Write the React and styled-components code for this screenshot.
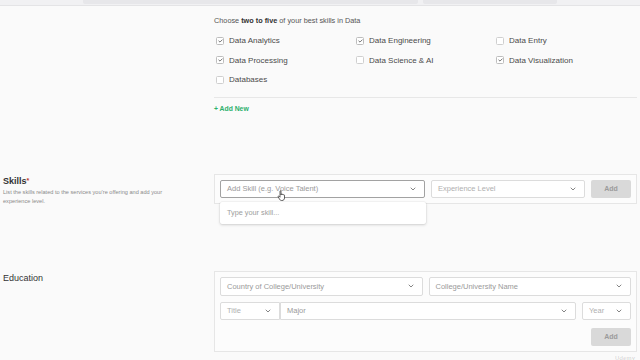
import React from "react";
import styled, { createGlobalStyle } from "styled-components";

const Global = createGlobalStyle`
  html, body { margin: 0; padding: 0; background: #fafafa; }
  body { font-family: "Liberation Sans", Arial, sans-serif; color: #3d3d3d; width: 640px; height: 360px; overflow: hidden; }
  * { box-sizing: border-box; }
`;

const TopStrip = styled.div`
  height: 6px;
  background: #f1f1f3;
  border-bottom: 1px solid #e4e4e6;
  display: flex;
  gap: 5px;
  padding-left: 83px;
`;
const Tab = styled.div`
  width: ${(p) => p.w}px;
  height: 4px;
  background: #e7e7ea;
  border-radius: 0 0 2px 2px;
`;

const Page = styled.div`
  position: relative;
  padding: 0 3px;
`;

const Section = styled.section`
  display: grid;
  grid-template-columns: 211px 1fr;
  align-items: start;
  margin-top: ${(p) => p.mt}px;
`;

const Side = styled.div`
  padding-top: ${(p) => p.pt || 0}px;
`;

const Heading = styled.div`
  font-size: 9px;
  line-height: 12px;
  font-weight: ${(p) => p.weight || 600};
  color: #333;
`;
const Req = styled.span`
  color: #c0392b;
  font-size: 7px;
  vertical-align: top;
`;
const Desc = styled.div`
  font-size: 5.6px;
  line-height: 9px;
  color: #8a8a8a;
  margin-top: 1px;
  width: 175px;
`;

const Main = styled.div`
  padding-top: ${(p) => p.pt || 0}px;
`;

const Intro = styled.div`
  font-size: 7.3px;
  line-height: 10px;
  color: #555;
  b { color: #333; font-weight: 700; }
`;

const CheckGrid = styled.div`
  display: grid;
  grid-template-columns: repeat(3, 140px);
  grid-auto-rows: 19.5px;
  margin-top: 5px;
  padding-left: 2px;
`;
const CheckItem = styled.label`
  display: flex;
  align-items: center;
  gap: 5px;
  font-size: 8px;
  color: #4a4a4a;
`;
const Box = styled.span`
  width: 8px;
  height: 8px;
  border: 1px solid ${(p) => (p.on ? "#bdbdbd" : "#cfcfcf")};
  border-radius: 1.5px;
  background: #fff;
  display: flex;
  align-items: center;
  justify-content: center;
`;

const Divider = styled.div`
  height: 1px;
  background: #e7e7e7;
  margin-top: 7.5px;
`;

const AddNew = styled.div`
  margin-top: 5.5px;
  font-size: 6.8px;
  line-height: 10px;
  font-weight: 700;
  color: #2ab06a;
`;

const Panel = styled.div`
  border: 1px solid #e6e6e6;
  background: #fcfcfc;
  padding: 5px;
  display: flex;
  flex-direction: column;
  gap: ${(p) => p.gap || 0}px;
  position: relative;
`;

const SkillRow = styled.div`
  display: grid;
  grid-template-columns: 205px 154px 40px;
  gap: 6px;
`;

const Field = styled.div`
  height: ${(p) => p.h || 18}px;
  border: 1px solid ${(p) => (p.focus ? "#a2a2a2" : "#dcdcdc")};
  border-radius: ${(p) => p.radius || "2px"};
  background: #fff;
  display: flex;
  align-items: center;
  justify-content: space-between;
  padding: 0 8px 0 6px;
  font-size: 7.5px;
  color: ${(p) => (p.dim ? "#b0b0b0" : "#9a9a9a")};
`;

const Chevron = () => (
  <svg width="6" height="4" viewBox="0 0 6 4">
    <path d="M1 1 L3 3 L5 1" fill="none" stroke="#777" strokeWidth="0.9" strokeLinecap="round" strokeLinejoin="round" />
  </svg>
);

const AddButton = styled.button`
  height: 18px;
  width: 40px;
  border: none;
  border-radius: 2px;
  background: #d9d9d9;
  color: #9b9b9b;
  font-family: inherit;
  font-size: 7px;
  font-weight: 700;
  padding: 0;
  align-self: ${(p) => (p.end ? "flex-end" : "auto")};
  margin-top: ${(p) => p.mt || 0}px;
`;

const Dropdown = styled.div`
  position: absolute;
  left: 5px;
  top: 27px;
  width: 206px;
  height: 22px;
  background: #fff;
  border-radius: 2px;
  box-shadow: 0 1px 3px rgba(0, 0, 0, 0.16), 0 0 0 0.5px rgba(0, 0, 0, 0.05);
  display: flex;
  align-items: center;
  padding-left: 7px;
  font-size: 7.3px;
  color: #9d9d9d;
  z-index: 2;
`;

const EduRow = styled.div`
  display: grid;
  grid-template-columns: ${(p) => p.cols};
  gap: ${(p) => p.gap}px;
`;
const Joined = styled.div`
  display: grid;
  grid-template-columns: 60px 1fr;
`;

const Cursor = styled.svg`
  position: absolute;
  left: 277px;
  top: 184px;
  z-index: 3;
`;

const Watermark = styled.div`
  position: absolute;
  right: 5px;
  top: 349px;
  font-size: 6px;
  color: rgba(0, 0, 0, 0.14);
  font-weight: 700;
`;

const skills = [
  ["Data Analytics", true],
  ["Data Engineering", true],
  ["Data Entry", false],
  ["Data Processing", true],
  ["Data Science & AI", false],
  ["Data Visualization", true],
  ["Databases", false],
];

const Check = () => (
  <svg width="5" height="4" viewBox="0 0 5 4">
    <path d="M0.8 2 L2 3.1 L4.2 0.9" fill="none" stroke="#555" strokeWidth="0.8" strokeLinecap="round" strokeLinejoin="round" />
  </svg>
);

export default function App() {
  return (
    <>
      <Global />
      <TopStrip>
        <Tab w={335} />
        <Tab w={134} />
      </TopStrip>
      <Page>
        <Section mt={0}>
          <Side />
          <Main pt={10}>
            <Intro>
              Choose <b>two to five</b> of your best skills in Data
            </Intro>
            <CheckGrid>
              {skills.map(([name, on]) => (
                <CheckItem key={name}>
                  <Box on={on}>{on && <Check />}</Box>
                  {name}
                </CheckItem>
              ))}
            </CheckGrid>
            <Divider />
            <AddNew>+ Add New</AddNew>
          </Main>
        </Section>

        <Section mt={60}>
          <Side pt={1}>
            <Heading>
              Skills<Req>*</Req>
            </Heading>
            <Desc>
              List the skills related to the services you’re offering and add your experience level.
            </Desc>
          </Side>
          <Panel>
            <SkillRow>
              <Field focus>
                Add Skill (e.g. Voice Talent)
                <Chevron />
              </Field>
              <Field dim>
                Experience Level
                <Chevron />
              </Field>
              <AddButton>Add</AddButton>
            </SkillRow>
            <Dropdown>Type your skill...</Dropdown>
          </Panel>
        </Section>

        <Section mt={65}>
          <Side pt={1}>
            <Heading weight={500}>Education</Heading>
          </Side>
          <Panel gap={6}>
            <EduRow cols="1fr 1fr" gap={6}>
              <Field h={19}>
                Country of College/University
                <Chevron />
              </Field>
              <Field h={19}>
                College/University Name
                <Chevron />
              </Field>
            </EduRow>
            <EduRow cols="356px 49px" gap={6}>
              <Joined>
                <Field dim radius="2px 0 0 2px">
                  Title
                  <Chevron />
                </Field>
                <Field radius="0 2px 2px 0">
                  Major
                  <Chevron />
                </Field>
              </Joined>
              <Field dim>
                Year
                <Chevron />
              </Field>
            </EduRow>
            <AddButton end mt={2}>Add</AddButton>
          </Panel>
        </Section>

        <Cursor width="10" height="12" viewBox="0 0 10 12">
          <path
            d="M3 1.2 C3 0.6 4 0.6 4 1.2 L4 5 L4.3 4.2 C4.5 3.7 5.3 3.8 5.3 4.4 L5.4 4.6 C5.6 4.1 6.4 4.2 6.4 4.8 L6.5 5 C6.7 4.6 7.5 4.7 7.5 5.3 L7.5 8 C7.5 9.5 6.5 10.5 5 10.5 L4.5 10.5 C3.5 10.5 3 10 2.5 9.2 L1.2 6.8 C0.9 6.2 1.6 5.7 2.1 6.2 L3 7.2 Z"
            fill="#fff"
            stroke="#222"
            strokeWidth="0.7"
            strokeLinejoin="round"
          />
        </Cursor>
        <Watermark>Udemy</Watermark>
      </Page>
    </>
  );
}
